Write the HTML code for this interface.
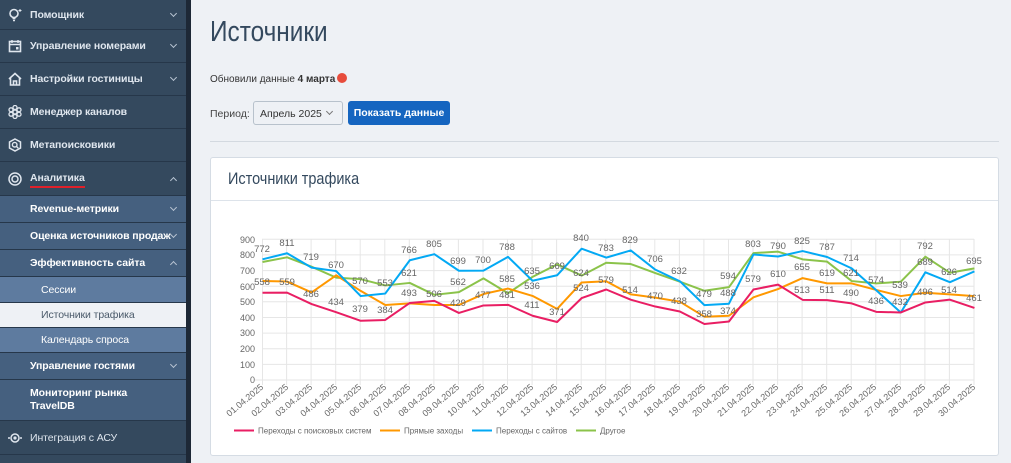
<!DOCTYPE html>
<html><head><meta charset="utf-8">
<style>
*{margin:0;padding:0;box-sizing:border-box}
body{width:1011px;height:463px;overflow:hidden;background:#eef1f5;font-family:"Liberation Sans","Noto Sans CJK SC",sans-serif;position:relative}
.sb{position:absolute;left:0;top:0;width:186px;height:463px;background:#34495e}
.scr{position:absolute;left:186px;top:0;width:5px;height:463px;background:#1d2836}
.it{position:absolute;left:0;width:186px;color:#dfe6ee;font-size:10.5px;font-weight:bold;border-bottom:1px solid #26374a;display:flex;align-items:center;letter-spacing:-0.1px}
.it .ic{position:absolute;left:8px;width:14px;height:14px}
.it .tx{position:absolute;left:30px}
.it .ch{position:absolute;right:10px;width:5px;height:5px;border-right:1.5px solid #b8c4d2;border-bottom:1.5px solid #b8c4d2;transform:rotate(45deg);top:calc(50% - 4px)}
.it .ch.up{transform:rotate(-135deg);top:calc(50% - 1px)}
.s1{background:#45607f;color:#fff}
.s2{background:#5e7b9f;color:#fff;font-weight:normal}
.s2 .tx{left:41px}
.act{background:#eef1f5;color:#4a5a6a}
h1{position:absolute;left:210px;top:16px;font-family:"Liberation Sans Narrow","Liberation Sans",sans-serif;font-weight:normal;font-size:29px;color:#34495e;transform:scaleX(0.84);transform-origin:left top;white-space:nowrap}
.upd{position:absolute;left:210px;top:73px;font-size:10px;color:#333}
.badge{display:inline-block;width:10px;height:10px;border-radius:50%;background:#e74c3c;vertical-align:-1px;margin-left:2px}
.per{position:absolute;left:210px;top:108px;font-size:10.5px;color:#444}
.sel{position:absolute;left:253px;top:101px;width:90px;height:24px;border:1px solid #b8c2cc;border-radius:3px;background:#eef1f5;font-size:10.5px;color:#333;padding:6px 0 0 6px}
.sel:after{content:"";position:absolute;right:10px;top:7px;width:4px;height:4px;border-right:1px solid #777;border-bottom:1px solid #777;transform:rotate(45deg)}
.btn{position:absolute;left:348px;top:101px;width:102px;height:24px;background:#1565c0;border-radius:3px;color:#fff;font-size:10.5px;font-weight:bold;text-align:center;line-height:24px}
.hr{position:absolute;left:210px;top:141px;width:789px;height:1px;background:#d3d9e0}
.card{position:absolute;left:210px;top:157px;width:789px;height:299px;background:#fff;border:1px solid #d5dce4;border-radius:3px}
.card .hd{height:43px;border-bottom:1px solid #dde3ea}
.card .hd span{position:absolute;left:17px;top:11px;font-family:"Liberation Sans Narrow","Liberation Sans",sans-serif;font-size:17px;color:#34495e;transform:scaleX(0.85);transform-origin:left top;white-space:nowrap}
svg text{font-family:"Liberation Sans",sans-serif}
</style></head><body>
<div class="sb">
<div class="it" style="top:0;height:30px"><svg class="ic" viewBox="0 0 14 14"><circle cx="6" cy="5.5" r="4" fill="none" stroke="#dfe6ee" stroke-width="1.6"/><path d="M4.5 10.5h3M5 12.5h2" stroke="#dfe6ee" stroke-width="1.4"/><path d="M12 1v3M10.5 2.5h3" stroke="#dfe6ee"/></svg><span class="tx">Помощник</span><span class="ch"></span></div>
<div class="it" style="top:30px;height:33px"><svg class="ic" viewBox="0 0 14 14"><rect x="1.5" y="2.5" width="11" height="10" fill="none" stroke="#dfe6ee" stroke-width="1.6"/><path d="M1.5 5.5h11M4 1v3M10 1v3" stroke="#dfe6ee" stroke-width="1.4"/><rect x="8" y="8" width="2.5" height="2.5" fill="#dfe6ee"/></svg><span class="tx">Управление номерами</span><span class="ch"></span></div>
<div class="it" style="top:63px;height:33px"><svg class="ic" viewBox="0 0 14 14"><path d="M1 7L7 1.5 13 7M2.5 6v7h9V6M5.5 13V9h3v4" fill="none" stroke="#dfe6ee" stroke-width="1.6"/></svg><span class="tx">Настройки гостиницы</span><span class="ch"></span></div>
<div class="it" style="top:96px;height:33px"><svg class="ic" viewBox="0 0 14 14"><g fill="none" stroke="#dfe6ee" stroke-width="1.3"><circle cx="7" cy="7" r="2"/><circle cx="7" cy="2.5" r="2"/><circle cx="7" cy="11.5" r="2"/><circle cx="3" cy="4.8" r="2"/><circle cx="11" cy="4.8" r="2"/><circle cx="3" cy="9.2" r="2"/><circle cx="11" cy="9.2" r="2"/></g></svg><span class="tx">Менеджер каналов</span></div>
<div class="it" style="top:129px;height:33px"><svg class="ic" viewBox="0 0 14 14"><path d="M7 1l5.5 3v6L7 13 1.5 10V4z" fill="none" stroke="#dfe6ee" stroke-width="1.5"/><circle cx="6.7" cy="6.7" r="2.3" fill="none" stroke="#dfe6ee" stroke-width="1.4"/><path d="M8.3 8.3l2 2" stroke="#dfe6ee" stroke-width="1.4"/></svg><span class="tx">Метапоисковики</span></div>
<div class="it" style="top:162px;height:34px"><svg class="ic" viewBox="0 0 14 14"><circle cx="7" cy="7" r="6" fill="none" stroke="#dfe6ee" stroke-width="1.5"/><circle cx="7" cy="7" r="3" fill="none" stroke="#dfe6ee" stroke-width="1.5"/></svg><span class="tx" style="border-bottom:2px solid #e0202a;top:10px;padding-bottom:2px">Аналитика</span><span class="ch up"></span></div>
<div class="it s1" style="top:196px;height:27px"><span class="tx">Revenue-метрики</span><span class="ch"></span></div>
<div class="it s1" style="top:223px;height:27px"><span class="tx">Оценка источников продаж</span><span class="ch"></span></div>
<div class="it s1" style="top:250px;height:27px"><span class="tx">Эффективность сайта</span><span class="ch up"></span></div>
<div class="it s2" style="top:277px;height:26px"><span class="tx">Сессии</span></div>
<div class="it s2 act" style="top:303px;height:25px"><span class="tx">Источники трафика</span></div>
<div class="it s2" style="top:328px;height:25px"><span class="tx">Календарь спроса</span></div>
<div class="it s1" style="top:353px;height:27px"><span class="tx">Управление гостями</span><span class="ch"></span></div>
<div class="it s1" style="top:380px;height:41px"><span class="tx" style="line-height:13px">Мониторинг рынка<br>TravelDB</span></div>
<div class="it" style="top:421px;height:34px"><svg class="ic" viewBox="0 0 14 14"><circle cx="7" cy="7" r="4" fill="none" stroke="#dfe6ee" stroke-width="1.5"/><circle cx="7" cy="7" r="1.6" fill="#dfe6ee"/><path d="M0 7h2M12 7h2" stroke="#dfe6ee" stroke-width="1.5"/></svg><span class="tx" style="font-weight:normal">Интеграция с АСУ</span></div>
</div>
<div class="scr"></div>
<h1>Источники</h1>
<div class="upd">Обновили данные <b>4 марта</b><span class="badge"></span></div>
<div class="per">Период:</div>
<div class="sel">Апрель 2025</div>
<div class="btn">Показать данные</div>
<div class="hr"></div>
<div class="card"><div class="hd"><span>Источники трафика</span></div></div>
<svg style="position:absolute;left:0;top:0" width="1011" height="463">
<g stroke="#e6e6e6" stroke-width="1">
<path d="M262 239.3H974M262 254.9H974M262 270.6H974M262 286.2H974M262 301.8H974M262 317.5H974M262 333.1H974M262 348.7H974M262 364.4H974M255 380H974"/>
<path d="M262.5 239V385M286.6 239V385M311.1 239V385M335.7 239V385M360.2 239V385M384.8 239V385M409.3 239V385M433.9 239V385M458.4 239V385M483 239V385M507.5 239V385M532.1 239V385M556.6 239V385M581.2 239V385M605.7 239V385M630.3 239V385M654.8 239V385M679.4 239V385M703.9 239V385M728.5 239V385M753 239V385M777.6 239V385M802.1 239V385M826.7 239V385M851.2 239V385M875.8 239V385M900.3 239V385M924.9 239V385M949.4 239V385M974 239V385"/>
</g>
<g font-size="9" fill="#666" text-anchor="end">
<text x="255" y="243">900</text><text x="255" y="258">800</text><text x="255" y="274">700</text><text x="255" y="290">600</text><text x="255" y="305">500</text><text x="255" y="321">400</text><text x="255" y="336">300</text><text x="255" y="352">200</text><text x="255" y="368">100</text><text x="255" y="383">0</text>
</g>
<g transform="translate(262.5,380) scale(24.55,-0.1563)" fill="none" stroke-width="2" stroke-linejoin="round">
<polyline vector-effect="non-scaling-stroke" stroke="#8bc34a" points="0,755 1,785 2,725 3,655 4,645 5,605 6,621 7,545 8,562 9,650 10,555 11,660 12,740 13,668 14,750 15,742 16,684 17,629 18,571 19,594 20,812 21,821 22,772 23,757 24,633 25,618 26,629 27,789 28,686 29,714"/>
<polyline vector-effect="non-scaling-stroke" stroke="#ff9800" points="0,633 1,630 2,560 3,670 4,570 5,480 6,490 7,480 8,480 9,550 10,585 11,538 12,455 13,624 14,632 15,548 16,527 17,501 18,405 19,411 20,529 21,582 22,652 23,618 24,618 25,576 26,537 27,558 28,548 29,537"/>
<polyline vector-effect="non-scaling-stroke" stroke="#03a9f4" points="0,772 1,811 2,719 3,697 4,537 5,553 6,766 7,805 8,699 9,700 10,788 11,635 12,670 13,840 14,783 15,829 16,706 17,632 18,479 19,488 20,803 21,790 22,825 23,787 24,714 25,574 26,432 27,689 28,626 29,695"/>
<polyline vector-effect="non-scaling-stroke" stroke="#e91e63" points="0,558 1,559 2,486 3,434 4,379 5,384 6,493 7,506 8,429 9,477 10,481 11,411 12,371 13,524 14,579 15,514 16,470 17,438 18,358 19,374 20,579 21,610 22,513 23,511 24,490 25,436 26,432 27,496 28,514 29,461"/>
</g>
<g font-size="9.5" fill="#666" text-anchor="middle">
<text x="262" y="252">772</text><text x="262" y="285">558</text><text x="287" y="246">811</text><text x="287" y="285">559</text>
<text x="311" y="260">719</text><text x="311" y="297">486</text><text x="336" y="268">670</text><text x="336" y="305">434</text>
<text x="360" y="284">570</text><text x="360" y="312">379</text><text x="385" y="286">553</text><text x="385" y="313">384</text>
<text x="409" y="253">766</text><text x="409" y="276">621</text><text x="409" y="296">493</text><text x="434" y="247">805</text><text x="434" y="297">506</text>
<text x="458" y="264">699</text><text x="458" y="285">562</text><text x="458" y="306">429</text><text x="483" y="263">700</text><text x="483" y="298">477</text>
<text x="507" y="250">788</text><text x="507" y="282">585</text><text x="507" y="298">481</text><text x="532" y="274">635</text><text x="532" y="289">536</text><text x="532" y="308">411</text>
<text x="557" y="269">669</text><text x="557" y="315">371</text><text x="581" y="241">840</text><text x="581" y="276">624</text><text x="581" y="291">524</text>
<text x="606" y="251">783</text><text x="606" y="283">579</text><text x="630" y="243">829</text><text x="630" y="293">514</text>
<text x="655" y="262">706</text><text x="655" y="299">470</text><text x="679" y="274">632</text><text x="679" y="304">438</text>
<text x="704" y="297">479</text><text x="704" y="317">358</text><text x="728" y="279">594</text><text x="728" y="296">488</text><text x="728" y="314">374</text>
<text x="753" y="247">803</text><text x="753" y="282">579</text><text x="778" y="249">790</text><text x="778" y="277">610</text>
<text x="802" y="244">825</text><text x="802" y="270">655</text><text x="802" y="293">513</text><text x="827" y="250">787</text><text x="827" y="276">619</text><text x="827" y="293">511</text>
<text x="851" y="261">714</text><text x="851" y="276">621</text><text x="851" y="296">490</text><text x="876" y="283">574</text><text x="876" y="304">436</text>
<text x="900" y="288">539</text><text x="900" y="305">432</text><text x="925" y="249">792</text><text x="925" y="265">689</text><text x="925" y="295">496</text>
<text x="949" y="275">626</text><text x="949" y="293">514</text><text x="974" y="264">695</text><text x="974" y="301">461</text>
</g>
<g font-size="9" fill="#666" text-anchor="end">
<text transform="translate(264,388) rotate(-40)">01.04.2025</text><text transform="translate(289,388) rotate(-40)">02.04.2025</text><text transform="translate(313,388) rotate(-40)">03.04.2025</text><text transform="translate(338,388) rotate(-40)">04.04.2025</text><text transform="translate(362,388) rotate(-40)">05.04.2025</text><text transform="translate(387,388) rotate(-40)">06.04.2025</text><text transform="translate(411,388) rotate(-40)">07.04.2025</text><text transform="translate(436,388) rotate(-40)">08.04.2025</text><text transform="translate(460,388) rotate(-40)">09.04.2025</text><text transform="translate(485,388) rotate(-40)">10.04.2025</text><text transform="translate(509,388) rotate(-40)">11.04.2025</text><text transform="translate(534,388) rotate(-40)">12.04.2025</text><text transform="translate(558,388) rotate(-40)">13.04.2025</text><text transform="translate(583,388) rotate(-40)">14.04.2025</text><text transform="translate(607,388) rotate(-40)">15.04.2025</text><text transform="translate(632,388) rotate(-40)">16.04.2025</text><text transform="translate(656,388) rotate(-40)">17.04.2025</text><text transform="translate(681,388) rotate(-40)">18.04.2025</text><text transform="translate(706,388) rotate(-40)">19.04.2025</text><text transform="translate(730,388) rotate(-40)">20.04.2025</text><text transform="translate(755,388) rotate(-40)">21.04.2025</text><text transform="translate(779,388) rotate(-40)">22.04.2025</text><text transform="translate(804,388) rotate(-40)">23.04.2025</text><text transform="translate(828,388) rotate(-40)">24.04.2025</text><text transform="translate(853,388) rotate(-40)">25.04.2025</text><text transform="translate(877,388) rotate(-40)">26.04.2025</text><text transform="translate(902,388) rotate(-40)">27.04.2025</text><text transform="translate(926,388) rotate(-40)">28.04.2025</text><text transform="translate(951,388) rotate(-40)">29.04.2025</text><text transform="translate(976,388) rotate(-40)">30.04.2025</text>
</g>
<g stroke-width="2"><path d="M234 430.5h20" stroke="#e91e63"/><path d="M380 430.5h20" stroke="#ff9800"/><path d="M472 430.5h20" stroke="#03a9f4"/><path d="M576 430.5h20" stroke="#8bc34a"/></g>
<g font-size="8" fill="#666"><text x="258" y="433.5">Переходы с поисковых систем</text><text x="404" y="433.5">Прямые заходы</text><text x="496" y="433.5">Переходы с сайтов</text><text x="600" y="433.5">Другое</text></g>
</svg>
</body></html>
